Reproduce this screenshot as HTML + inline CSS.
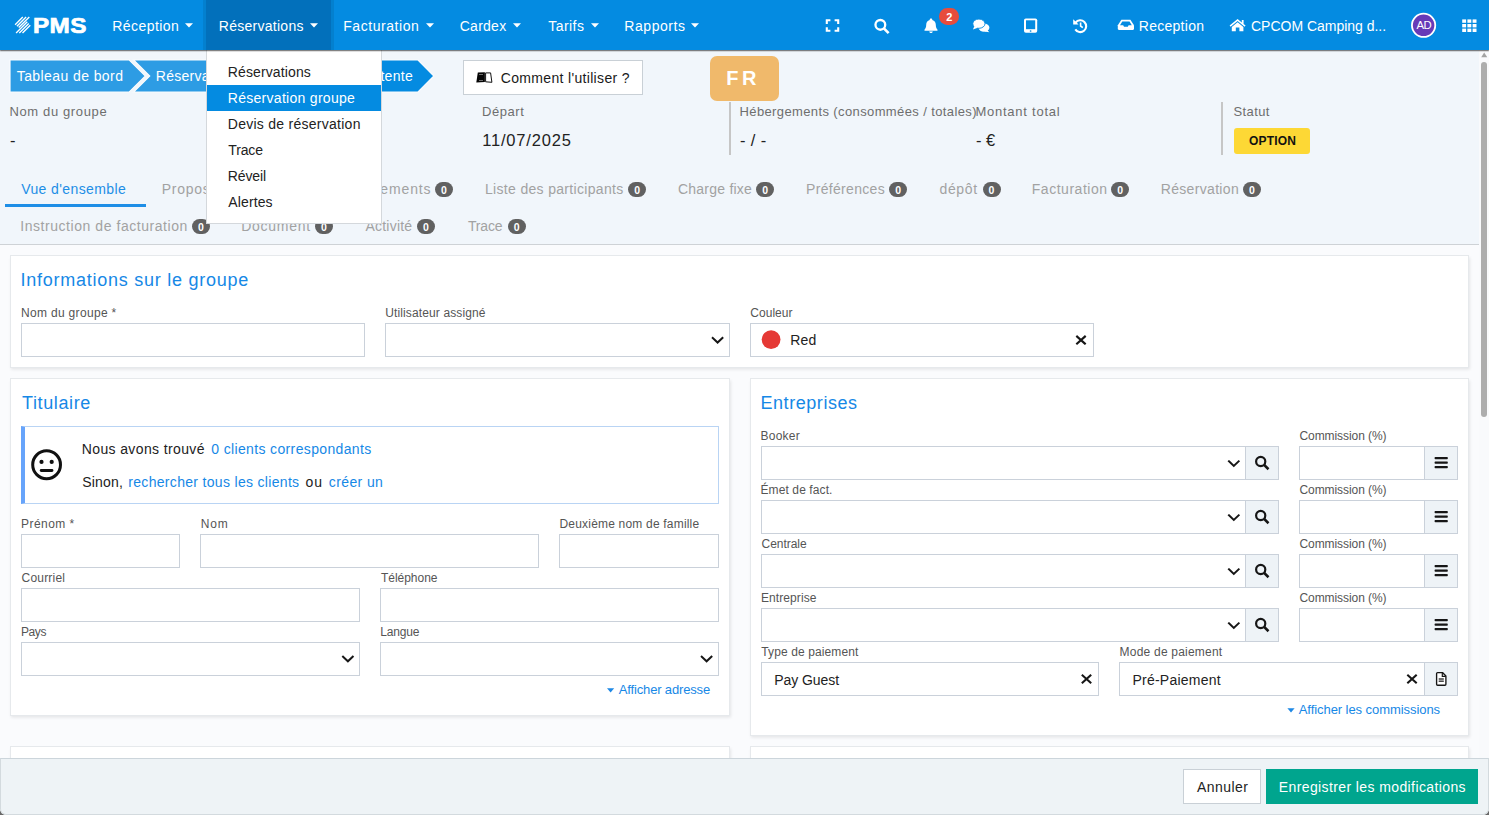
<!DOCTYPE html>
<html lang="fr"><head><meta charset="utf-8"><title>PMS - Réservation groupe</title>
<style>
html,body{margin:0;padding:0;background:#686868;}
body{width:1489px;height:815px;overflow:hidden;font-family:"Liberation Sans", sans-serif;}
#app{position:relative;width:1489px;height:815px;overflow:hidden;background:#fafbfd;border-radius:0 0 6px 6px;}
#app div,#app svg{position:absolute;box-sizing:border-box;}
.t{position:absolute;white-space:nowrap;line-height:20px;height:20px;}
.card{background:#fff;border:1px solid #e6e9ec;box-shadow:1px 1.5px 3px rgba(0,0,0,.09);}
.inp{background:#fff;border:1px solid #cad1da;}
.addon{background:#eef3f7;border:1px solid #cad1da;}
.bdg{background:#616161;border-radius:7.5px;color:#fff;font-size:10.5px;font-weight:700;line-height:16.4px;text-align:center;}
</style></head><body>
<div id="app">
<div class="" style="left:0px;top:50px;width:1489px;height:195px;background:#f1f6fb;border-bottom:1px solid #ced2d6;"></div>
<svg style="left:0px;top:56px;" width="440" height="40" viewBox="0 56 440 40"><g stroke="#f9fbfd" stroke-width="1.2"><polygon points="10,60 129.3,60 145.4,76 129.3,92 10,92" fill="#2d9ce4"/><polygon points="133.6,60 247,60 263.1,76 247,92 133.6,92 149.7,76" fill="#2d9ce4"/><polygon points="252.4,60 418,60 433.9,76 418,92 252.4,92 268.5,76" fill="#048be1"/></g></svg>
<div class="" style="left:463px;top:60px;width:180px;height:35px;background:#fff;border:1px solid #c9d0d6;"></div>
<svg style="left:474px;top:70px;" width="20" height="15" viewBox="474 70 20 15"><polygon points="477.8,72.6 484.9,72.3 484.9,82 476.3,82.6" fill="#050505"/><polygon points="485.6,72.9 490.6,72.9 491.9,82.3 485.6,81.8" fill="#fff" stroke="#050505" stroke-width="0.95" stroke-linejoin="round"/><rect x="479" y="74" width="4" height="0.8" fill="#888"/><rect x="479" y="80" width="4" height="0.8" fill="#888"/></svg>
<div class="" style="left:710px;top:56px;width:69px;height:45px;background:#f0b96b;border-radius:7px;"></div>
<div class="" style="left:728.5px;top:102px;width:2.0px;height:53px;background:#c6c6c6;"></div>
<div class="" style="left:1221px;top:102px;width:2px;height:53px;background:#c6c6c6;"></div>
<div class="" style="left:1234px;top:128px;width:76px;height:26px;background:#fdd835;border-radius:3px;"></div>
<div class="" style="left:5px;top:204px;width:141px;height:3px;background:#1e8ee6;"></div>
<div class="bdg" style="left:252px;top:182px;width:18px;height:15px;">0</div>
<div class="bdg" style="left:435px;top:182px;width:18px;height:15px;">0</div>
<div class="bdg" style="left:628.25px;top:182px;width:18.0px;height:15px;">0</div>
<div class="bdg" style="left:756.25px;top:182px;width:18.0px;height:15px;">0</div>
<div class="bdg" style="left:889.25px;top:182px;width:18.0px;height:15px;">0</div>
<div class="bdg" style="left:982.5px;top:182px;width:18.0px;height:15px;">0</div>
<div class="bdg" style="left:1111.25px;top:182px;width:18.0px;height:15px;">0</div>
<div class="bdg" style="left:1243px;top:182px;width:18px;height:15px;">0</div>
<div class="bdg" style="left:192px;top:219px;width:18px;height:15px;">0</div>
<div class="bdg" style="left:315px;top:219px;width:18px;height:15px;">0</div>
<div class="bdg" style="left:417px;top:219px;width:18px;height:15px;">0</div>
<div class="bdg" style="left:507.75px;top:219px;width:18.0px;height:15px;">0</div>
<div class="card" style="left:10px;top:255px;width:1459px;height:113px;"></div>
<div class="inp" style="left:21px;top:323px;width:344px;height:34px;"></div>
<div class="inp" style="left:385px;top:323px;width:345px;height:34px;"></div>
<div class="inp" style="left:750px;top:323px;width:344px;height:34px;"></div>
<div class="card" style="left:10px;top:378px;width:720px;height:338px;"></div>
<div class="" style="left:21px;top:426px;width:698px;height:78px;background:#fff;border:1px solid #b9d4f4;border-left:4px solid #67a4fb;"></div>
<div class="inp" style="left:21px;top:534px;width:159px;height:34px;"></div>
<div class="inp" style="left:200px;top:534px;width:339px;height:34px;"></div>
<div class="inp" style="left:559px;top:534px;width:160px;height:34px;"></div>
<div class="inp" style="left:21px;top:588px;width:339px;height:34px;"></div>
<div class="inp" style="left:380px;top:588px;width:339px;height:34px;"></div>
<div class="inp" style="left:21px;top:642px;width:339px;height:34px;"></div>
<div class="inp" style="left:380px;top:642px;width:339px;height:34px;"></div>
<div class="card" style="left:750px;top:378px;width:719px;height:358px;"></div>
<div class="inp" style="left:761px;top:446px;width:485px;height:34px;"></div>
<div class="addon" style="left:1245px;top:446px;width:34px;height:34px;"></div>
<div class="inp" style="left:1299px;top:446px;width:126px;height:34px;"></div>
<div class="addon" style="left:1424px;top:446px;width:34px;height:34px;"></div>
<div class="inp" style="left:761px;top:500px;width:485px;height:34px;"></div>
<div class="addon" style="left:1245px;top:500px;width:34px;height:34px;"></div>
<div class="inp" style="left:1299px;top:500px;width:126px;height:34px;"></div>
<div class="addon" style="left:1424px;top:500px;width:34px;height:34px;"></div>
<div class="inp" style="left:761px;top:554px;width:485px;height:34px;"></div>
<div class="addon" style="left:1245px;top:554px;width:34px;height:34px;"></div>
<div class="inp" style="left:1299px;top:554px;width:126px;height:34px;"></div>
<div class="addon" style="left:1424px;top:554px;width:34px;height:34px;"></div>
<div class="inp" style="left:761px;top:608px;width:485px;height:34px;"></div>
<div class="addon" style="left:1245px;top:608px;width:34px;height:34px;"></div>
<div class="inp" style="left:1299px;top:608px;width:126px;height:34px;"></div>
<div class="addon" style="left:1424px;top:608px;width:34px;height:34px;"></div>
<div class="inp" style="left:761px;top:662px;width:338px;height:34px;"></div>
<div class="inp" style="left:1119px;top:662px;width:306px;height:34px;"></div>
<div class="addon" style="left:1424px;top:662px;width:34px;height:34px;"></div>
<div class="card" style="left:10px;top:746px;width:720px;height:66px;"></div>
<div class="card" style="left:750px;top:746px;width:719px;height:66px;"></div>
<svg style="left:0px;top:245px;z-index:5;" width="1479" height="515" viewBox="0 245 1479 515"><polyline points="712.75,338.0 717.6,342.59999999999997 722.45,338.0" fill="none" stroke="#161616" stroke-width="2" stroke-linecap="square"/><circle cx="771.1" cy="339.6" r="9.4" fill="#e53935"/><path d="M1077.1,336.6 L1084.9,343.6 M1084.9,336.6 L1077.1,343.6" stroke="#161616" stroke-width="2.1" stroke-linecap="square"/><circle cx="46.6" cy="464.75" r="13.9" fill="none" stroke="#111" stroke-width="3"/><circle cx="41.5" cy="461.9" r="2.1" fill="#111"/><circle cx="51.7" cy="461.9" r="2.1" fill="#111"/><path d="M41.2,470.5 L52,470.5" stroke="#111" stroke-width="2.8" stroke-linecap="round"/><polyline points="343.04999999999995,656.7 347.9,661.3000000000001 352.75,656.7" fill="none" stroke="#161616" stroke-width="2" stroke-linecap="square"/><polyline points="701.75,656.7 706.6,661.3000000000001 711.45,656.7" fill="none" stroke="#161616" stroke-width="2" stroke-linecap="square"/><polygon points="607,688.2 614.2,688.2 610.6,692.4" fill="#1e88e5"/><polyline points="1228.95,461.3 1233.8,465.9 1238.6499999999999,461.3" fill="none" stroke="#161616" stroke-width="2" stroke-linecap="square"/><circle cx="1260.7" cy="461.45" r="4.60" fill="none" stroke="#161616" stroke-width="2.20"/><path d="M1264.00,464.75 L1268.50,469.25" stroke="#161616" stroke-width="2.50"/><rect x="1434.6000000000001" y="457.09999999999997" width="13.2" height="2.1" rx="0.7" fill="#161616"/><rect x="1434.6000000000001" y="461.59999999999997" width="13.2" height="2.1" rx="0.7" fill="#161616"/><rect x="1434.6000000000001" y="466.09999999999997" width="13.2" height="2.1" rx="0.7" fill="#161616"/><polyline points="1228.95,515.3000000000001 1233.8,519.9000000000001 1238.6499999999999,515.3000000000001" fill="none" stroke="#161616" stroke-width="2" stroke-linecap="square"/><circle cx="1260.7" cy="515.45" r="4.60" fill="none" stroke="#161616" stroke-width="2.20"/><path d="M1264.00,518.75 L1268.50,523.25" stroke="#161616" stroke-width="2.50"/><rect x="1434.6000000000001" y="511.1" width="13.2" height="2.1" rx="0.7" fill="#161616"/><rect x="1434.6000000000001" y="515.6" width="13.2" height="2.1" rx="0.7" fill="#161616"/><rect x="1434.6000000000001" y="520.1" width="13.2" height="2.1" rx="0.7" fill="#161616"/><polyline points="1228.95,569.3000000000001 1233.8,573.9000000000001 1238.6499999999999,569.3000000000001" fill="none" stroke="#161616" stroke-width="2" stroke-linecap="square"/><circle cx="1260.7" cy="569.45" r="4.60" fill="none" stroke="#161616" stroke-width="2.20"/><path d="M1264.00,572.75 L1268.50,577.25" stroke="#161616" stroke-width="2.50"/><rect x="1434.6000000000001" y="565.1" width="13.2" height="2.1" rx="0.7" fill="#161616"/><rect x="1434.6000000000001" y="569.6" width="13.2" height="2.1" rx="0.7" fill="#161616"/><rect x="1434.6000000000001" y="574.1" width="13.2" height="2.1" rx="0.7" fill="#161616"/><polyline points="1228.95,623.3000000000001 1233.8,627.9000000000001 1238.6499999999999,623.3000000000001" fill="none" stroke="#161616" stroke-width="2" stroke-linecap="square"/><circle cx="1260.7" cy="623.45" r="4.60" fill="none" stroke="#161616" stroke-width="2.20"/><path d="M1264.00,626.75 L1268.50,631.25" stroke="#161616" stroke-width="2.50"/><rect x="1434.6000000000001" y="619.1" width="13.2" height="2.1" rx="0.7" fill="#161616"/><rect x="1434.6000000000001" y="623.6" width="13.2" height="2.1" rx="0.7" fill="#161616"/><rect x="1434.6000000000001" y="628.1" width="13.2" height="2.1" rx="0.7" fill="#161616"/><path d="M1082.6,675.5 L1090.4,682.5 M1090.4,675.5 L1082.6,682.5" stroke="#161616" stroke-width="2.1" stroke-linecap="square"/><path d="M1408.1,675.5 L1415.9,682.5 M1415.9,675.5 L1408.1,682.5" stroke="#161616" stroke-width="2.1" stroke-linecap="square"/><path d="M1437.6,672.6 H1442.5 L1445.9,676 V684.2 a1,1 0 0 1 -1,1 H1437.6 a1,1 0 0 1 -1,-1 V673.6 a1,1 0 0 1 1,-1 Z" fill="#fff" stroke="#161616" stroke-width="1.35" stroke-linejoin="round"/><path d="M1442.3,672.8 V676.3 H1445.8" fill="none" stroke="#161616" stroke-width="1.2"/><rect x="1438.7" y="678.3" width="5.1" height="1.4" fill="#333"/><rect x="1438.7" y="680.5" width="5.1" height="1.4" fill="#333"/><polygon points="1287.4,708.2 1294.6,708.2 1291,712.4" fill="#1e88e5"/></svg>
<div class="" style="left:1479px;top:50px;width:10px;height:708px;background:#f9fafc;z-index:22;"></div>
<div class="" style="left:1481.25px;top:62px;width:5.75px;height:354.5px;background:#adadad;border-radius:3px;z-index:23;"></div>
<svg style="left:1479px;top:50px;z-index:23;" width="10" height="10" viewBox="1479 50 10 10"><polygon points="1481.2,57.2 1487.2,57.2 1484.2,52.4" fill="#a3a3a3"/></svg>
<div class="" style="left:206px;top:50px;width:176px;height:174px;background:#fff;border:1px solid #d4d8dc;border-top:none;z-index:20;"></div>
<div class="" style="left:207px;top:85px;width:174px;height:26px;background:#048be1;z-index:20;"></div>
<div class="" style="left:0px;top:0px;width:1489px;height:50px;background:#048be1;box-shadow:0 1px 1.2px rgba(0,0,0,.62);z-index:25;"></div>
<div class="" style="left:206px;top:0px;width:125px;height:50px;background:#0270bb;z-index:26;box-shadow:3px 0 0 rgba(0,0,0,.08),-3px 0 0 rgba(0,0,0,.08);"></div>
<svg style="left:0px;top:0px;z-index:29;" width="1489" height="50" viewBox="0 0 1489 50"><path d="M15.1,24.7 L22.8,17.0" stroke="#fff" stroke-width="1.35"/><path d="M16.9,26.2 L26.1,17.0" stroke="#fff" stroke-width="1.35"/><path d="M18.7,27.6 L29.3,17.0" stroke="#fff" stroke-width="1.35"/><path d="M16.1,33.0 L27.3,21.8" stroke="#fff" stroke-width="1.35"/><path d="M19.3,33.0 L28.8,23.5" stroke="#fff" stroke-width="1.35"/><path d="M22.5,33.0 L30.3,25.2" stroke="#fff" stroke-width="1.35"/><polygon points="185,23.3 193,23.3 189,27.4" fill="#fff"/><polygon points="310,23.3 318,23.3 314,27.4" fill="#fff"/><polygon points="426,23.3 434,23.3 430,27.4" fill="#fff"/><polygon points="513,23.3 521,23.3 517,27.4" fill="#fff"/><polygon points="591,23.3 599,23.3 595,27.4" fill="#fff"/><polygon points="691,23.3 699,23.3 695,27.4" fill="#fff"/><path d="M826.8,23.900000000000002 V20.3 H830.4 M834.6,20.3 H838.2 V23.900000000000002 M838.2,27.2 V30.8 H834.6 M830.4,30.8 H826.8 V27.2" fill="none" stroke="#fff" stroke-width="2.1"/><circle cx="880.35" cy="24.85" r="4.88" fill="none" stroke="#fff" stroke-width="2.33"/><path d="M883.85,28.35 L888.62,33.12" stroke="#fff" stroke-width="2.65"/><path d="M931,18.6 C931.8,18.6 932.3,19.1 932.3,19.9 C934.6,20.5 935.8,22.4 935.8,24.8 C935.8,27.4 936.6,28.6 937.4,29.4 C937.8,29.9 937.5,30.8 936.8,30.8 L925.2,30.8 C924.5,30.8 924.2,29.9 924.6,29.4 C925.4,28.6 926.2,27.4 926.2,24.8 C926.2,22.4 927.4,20.5 929.7,19.9 C929.7,19.1 930.2,18.6 931,18.6 Z" fill="#fff"/><path d="M929.2,31.5 H932.8 C932.8,32.4 932,33 931,33 C930,33 929.2,32.4 929.2,31.5 Z" fill="#fff"/><ellipse cx="984" cy="27.7" rx="5.4" ry="4.1" fill="#fff"/><path d="M987.2,30 L989.3,32.3 L984.6,31.6 Z" fill="#fff"/><ellipse cx="978.9" cy="23.7" rx="6.1" ry="4.6" fill="#fff" stroke="#048be1" stroke-width="0.9"/><path d="M974.6,25.8 L972.9,29.4 L977.8,27.8 Z" fill="#fff"/><rect x="1024" y="18.4" width="13.2" height="14.4" rx="1.8" fill="#fff"/><rect x="1026" y="20.3" width="9.2" height="8.9" fill="#048be1"/><circle cx="1030.6" cy="31" r="0.85" fill="#048be1"/><path d="M1075.6,22.6 A5.9,5.9 0 1 1 1075.3,29.4" fill="none" stroke="#fff" stroke-width="2.1"/><path d="M1073.2,19.2 L1073.2,24.6 L1078.6,24.6 Z" fill="#fff"/><path d="M1080.6,22.4 V26 L1082.8,27.6" fill="none" stroke="#fff" stroke-width="1.6"/><path d="M1121.4,19.8 H1130.4 L1134,25.2 V28.8 C1134,29.5 1133.5,30 1132.8,30 H1119 C1118.3,30 1117.8,29.5 1117.8,28.8 V25.2 Z" fill="#fff"/><path d="M1122.3,21.6 H1129.5 L1131.8,25.2 H1128.6 L1127.8,26.8 H1124 L1123.2,25.2 H1120 Z" fill="#048be1"/><path d="M1237.6,19 L1229.6,25.6 L1230.6,26.8 L1237.6,21 L1244.6,26.8 L1245.6,25.6 L1243.6,23.9 V20 H1241.8 V22.4 Z" fill="#fff"/><path d="M1237.6,22.2 L1231.8,27 V31.2 H1235.8 V27.6 H1239.4 V31.2 H1243.4 V27 Z" fill="#fff"/><circle cx="1423.6" cy="25.3" r="11.65" fill="#673ab7" stroke="#fff" stroke-width="1.8"/><rect x="1462.20" y="19.40" width="3.9" height="3.4" fill="#fff"/><rect x="1462.20" y="24.00" width="3.9" height="3.4" fill="#fff"/><rect x="1462.20" y="28.60" width="3.9" height="3.4" fill="#fff"/><rect x="1467.40" y="19.40" width="3.9" height="3.4" fill="#fff"/><rect x="1467.40" y="24.00" width="3.9" height="3.4" fill="#fff"/><rect x="1467.40" y="28.60" width="3.9" height="3.4" fill="#fff"/><rect x="1472.60" y="19.40" width="3.9" height="3.4" fill="#fff"/><rect x="1472.60" y="24.00" width="3.9" height="3.4" fill="#fff"/><rect x="1472.60" y="28.60" width="3.9" height="3.4" fill="#fff"/></svg>
<div class="" style="left:939px;top:8.2px;width:20.200000000000045px;height:16.6px;background:#e74c3c;border-radius:8.3px;z-index:30;"></div>
<div class="" style="left:0px;top:758px;width:1489px;height:57px;background:#eef3f6;border:1px solid #d3dade;border-top:1px solid #ccd5db;border-radius:0 0 6px 6px;z-index:40;"></div>
<div class="" style="left:1183px;top:769px;width:78px;height:35px;background:#fff;border:1px solid #c9d0d6;z-index:41;"></div>
<div class="" style="left:1266px;top:769px;width:212px;height:35px;background:#00a58e;z-index:41;"></div>
<span class="t" style="left:33.01px;top:16.00px;font-size:21.5px;color:#fff;font-weight:700;letter-spacing:0.309px;z-index:30;-webkit-text-stroke:0.7px #fff;transform:translateY(0px) scale(1.13,1);transform-origin:0 17px;">PMS</span>
<span class="t" style="left:112.25px;top:16.00px;font-size:14px;color:#fff;font-weight:400;letter-spacing:0.438px;z-index:30;">Réception</span>
<span class="t" style="left:218.75px;top:16.00px;font-size:14px;color:#fff;font-weight:400;letter-spacing:0.273px;z-index:30;">Réservations</span>
<span class="t" style="left:343.25px;top:16.00px;font-size:14px;color:#fff;font-weight:400;letter-spacing:0.550px;z-index:30;">Facturation</span>
<span class="t" style="left:459.75px;top:16.00px;font-size:14px;color:#fff;font-weight:400;letter-spacing:0.250px;z-index:30;">Cardex</span>
<span class="t" style="left:548.25px;top:16.00px;font-size:14px;color:#fff;font-weight:400;letter-spacing:0.450px;z-index:30;">Tarifs</span>
<span class="t" style="left:624.25px;top:16.00px;font-size:14px;color:#fff;font-weight:400;letter-spacing:0.571px;z-index:30;">Rapports</span>
<span class="t" style="left:1138.75px;top:16.00px;font-size:14px;color:#fff;font-weight:400;letter-spacing:0.281px;z-index:30;">Reception</span>
<span class="t" style="left:1251.00px;top:16.00px;font-size:14px;color:#fff;font-weight:400;letter-spacing:-0.015px;z-index:30;">CPCOM Camping d...</span>
<span class="t" style="left:946.20px;top:7.00px;font-size:11px;color:#fff;font-weight:700;letter-spacing:0.000px;z-index:31;">2</span>
<span class="t" style="left:1416.60px;top:15.00px;font-size:11.3px;color:#fff;font-weight:400;letter-spacing:-0.750px;z-index:31;">AD</span>
<span class="t" style="left:16.75px;top:66.00px;font-size:14px;color:#fff;font-weight:400;letter-spacing:0.411px;">Tableau de bord</span>
<span class="t" style="left:155.75px;top:66.00px;font-size:14px;color:#fff;font-weight:400;letter-spacing:0.273px;">Réservations</span>
<span class="t" style="left:321.75px;top:66.00px;font-size:14px;color:#fff;font-weight:400;letter-spacing:0.304px;">Liste d&#x27;attente</span>
<span class="t" style="left:500.75px;top:68.00px;font-size:14px;color:#1a1a1a;font-weight:400;letter-spacing:0.329px;">Comment l&#x27;utiliser ?</span>
<span class="t" style="left:726.25px;top:68.00px;font-size:20px;color:#fff;font-weight:700;letter-spacing:-1.000px;">F R</span>
<span class="t" style="left:9.50px;top:102.00px;font-size:13px;color:#6e6e6e;font-weight:400;letter-spacing:0.625px;">Nom du groupe</span>
<span class="t" style="left:246.50px;top:102.00px;font-size:13px;color:#6e6e6e;font-weight:400;letter-spacing:0.667px;">Arrivée</span>
<span class="t" style="left:482.00px;top:102.00px;font-size:13px;color:#6e6e6e;font-weight:400;letter-spacing:0.550px;">Départ</span>
<span class="t" style="left:739.50px;top:102.00px;font-size:13px;color:#6e6e6e;font-weight:400;letter-spacing:0.382px;">Hébergements (consommées / totales)</span>
<span class="t" style="left:975.40px;top:102.00px;font-size:13px;color:#6e6e6e;font-weight:400;letter-spacing:0.758px;">Montant total</span>
<span class="t" style="left:1233.50px;top:102.00px;font-size:13px;color:#6e6e6e;font-weight:400;letter-spacing:0.400px;">Statut</span>
<span class="t" style="left:10.05px;top:130.00px;font-size:16.5px;color:#222;font-weight:400;letter-spacing:0.000px;">-</span>
<span class="t" style="left:245.65px;top:130.00px;font-size:16.5px;color:#222;font-weight:400;letter-spacing:0.833px;">11/07/2025</span>
<span class="t" style="left:482.15px;top:130.00px;font-size:16.5px;color:#222;font-weight:400;letter-spacing:0.833px;">11/07/2025</span>
<span class="t" style="left:740.05px;top:130.00px;font-size:16.5px;color:#222;font-weight:400;letter-spacing:0.363px;">- / -</span>
<span class="t" style="left:976.05px;top:130.00px;font-size:16.5px;color:#222;font-weight:400;letter-spacing:-0.025px;">- €</span>
<span class="t" style="left:1249.00px;top:131.00px;font-size:12px;color:#111;font-weight:700;letter-spacing:0.200px;">OPTION</span>
<span class="t" style="left:21.25px;top:179.00px;font-size:14px;color:#1e8ee6;font-weight:400;letter-spacing:0.385px;">Vue d&#x27;ensemble</span>
<span class="t" style="left:161.75px;top:179.00px;font-size:14px;color:#a2a2a2;font-weight:400;letter-spacing:0.750px;">Propositions</span>
<span class="t" style="left:329.25px;top:179.00px;font-size:14px;color:#a2a2a2;font-weight:400;letter-spacing:0.864px;">Hébergements</span>
<span class="t" style="left:485.00px;top:179.00px;font-size:14px;color:#a2a2a2;font-weight:400;letter-spacing:0.321px;">Liste des participants</span>
<span class="t" style="left:678.00px;top:179.00px;font-size:14px;color:#a2a2a2;font-weight:400;letter-spacing:0.225px;">Charge fixe</span>
<span class="t" style="left:806.00px;top:179.00px;font-size:14px;color:#a2a2a2;font-weight:400;letter-spacing:0.325px;">Préférences</span>
<span class="t" style="left:939.50px;top:179.00px;font-size:14px;color:#a2a2a2;font-weight:400;letter-spacing:0.625px;">dépôt</span>
<span class="t" style="left:1031.75px;top:179.00px;font-size:14px;color:#a2a2a2;font-weight:400;letter-spacing:0.525px;">Facturation</span>
<span class="t" style="left:1160.75px;top:179.00px;font-size:14px;color:#a2a2a2;font-weight:400;letter-spacing:0.325px;">Réservation</span>
<span class="t" style="left:20.25px;top:216.00px;font-size:14px;color:#a2a2a2;font-weight:400;letter-spacing:0.550px;">Instruction de facturation</span>
<span class="t" style="left:241.25px;top:216.00px;font-size:14px;color:#a2a2a2;font-weight:400;letter-spacing:0.714px;">Document</span>
<span class="t" style="left:365.50px;top:216.00px;font-size:14px;color:#a2a2a2;font-weight:400;letter-spacing:0.214px;">Activité</span>
<span class="t" style="left:468.00px;top:216.00px;font-size:14px;color:#a2a2a2;font-weight:400;letter-spacing:-0.188px;">Trace</span>
<span class="t" style="left:20.50px;top:270.00px;font-size:18px;color:#1688e6;font-weight:400;letter-spacing:0.750px;">Informations sur le groupe</span>
<span class="t" style="left:21.00px;top:303.00px;font-size:12px;color:#555;font-weight:400;letter-spacing:0.321px;">Nom du groupe *</span>
<span class="t" style="left:385.25px;top:303.00px;font-size:12px;color:#555;font-weight:400;letter-spacing:0.125px;">Utilisateur assigné</span>
<span class="t" style="left:750.25px;top:303.00px;font-size:12px;color:#555;font-weight:400;letter-spacing:0.042px;">Couleur</span>
<span class="t" style="left:790.25px;top:330.00px;font-size:14px;color:#222;font-weight:400;letter-spacing:0.125px;">Red</span>
<span class="t" style="left:22.00px;top:393.00px;font-size:18px;color:#1688e6;font-weight:400;letter-spacing:0.625px;">Titulaire</span>
<span class="t" style="left:81.75px;top:439.00px;font-size:14px;color:#222;font-weight:400;letter-spacing:0.375px;">Nous avons trouvé</span>
<span class="t" style="left:211.25px;top:439.00px;font-size:14px;color:#1688e6;font-weight:400;letter-spacing:0.359px;">0 clients correspondants</span>
<span class="t" style="left:82.25px;top:472.00px;font-size:14px;color:#222;font-weight:400;letter-spacing:0.200px;">Sinon,</span>
<span class="t" style="left:128.25px;top:472.00px;font-size:14px;color:#1688e6;font-weight:400;letter-spacing:0.317px;">rechercher tous les clients</span>
<span class="t" style="left:305.50px;top:472.00px;font-size:14px;color:#222;font-weight:400;letter-spacing:1.000px;">ou</span>
<span class="t" style="left:328.75px;top:472.00px;font-size:14px;color:#1688e6;font-weight:400;letter-spacing:0.393px;">créer un</span>
<span class="t" style="left:21.00px;top:514.00px;font-size:12px;color:#555;font-weight:400;letter-spacing:0.464px;">Prénom *</span>
<span class="t" style="left:200.75px;top:514.00px;font-size:12px;color:#555;font-weight:400;letter-spacing:0.875px;">Nom</span>
<span class="t" style="left:559.50px;top:514.00px;font-size:12px;color:#555;font-weight:400;letter-spacing:0.193px;">Deuxième nom de famille</span>
<span class="t" style="left:21.50px;top:568.00px;font-size:12px;color:#555;font-weight:400;letter-spacing:0.214px;">Courriel</span>
<span class="t" style="left:381.00px;top:568.00px;font-size:12px;color:#555;font-weight:400;letter-spacing:-0.031px;">Téléphone</span>
<span class="t" style="left:21.00px;top:622.00px;font-size:12px;color:#555;font-weight:400;letter-spacing:-0.417px;">Pays</span>
<span class="t" style="left:380.25px;top:622.00px;font-size:12px;color:#555;font-weight:400;letter-spacing:-0.150px;">Langue</span>
<span class="t" style="left:618.75px;top:680.00px;font-size:13px;color:#1688e6;font-weight:400;letter-spacing:-0.150px;">Afficher adresse</span>
<span class="t" style="left:760.50px;top:393.00px;font-size:18px;color:#1688e6;font-weight:400;letter-spacing:0.550px;">Entreprises</span>
<span class="t" style="left:760.50px;top:426.00px;font-size:12px;color:#555;font-weight:400;letter-spacing:0.250px;">Booker</span>
<span class="t" style="left:760.50px;top:480.00px;font-size:12px;color:#555;font-weight:400;letter-spacing:0.104px;">Émet de fact.</span>
<span class="t" style="left:761.50px;top:534.00px;font-size:12px;color:#555;font-weight:400;letter-spacing:-0.036px;">Centrale</span>
<span class="t" style="left:761.00px;top:588.00px;font-size:12px;color:#555;font-weight:400;letter-spacing:0.083px;">Entreprise</span>
<span class="t" style="left:761.25px;top:642.00px;font-size:12px;color:#555;font-weight:400;letter-spacing:0.117px;">Type de paiement</span>
<span class="t" style="left:1119.60px;top:642.00px;font-size:12px;color:#555;font-weight:400;letter-spacing:0.210px;">Mode de paiement</span>
<span class="t" style="left:1299.50px;top:426.00px;font-size:12px;color:#555;font-weight:400;letter-spacing:-0.077px;">Commission (%)</span>
<span class="t" style="left:1299.50px;top:480.00px;font-size:12px;color:#555;font-weight:400;letter-spacing:-0.077px;">Commission (%)</span>
<span class="t" style="left:1299.50px;top:534.00px;font-size:12px;color:#555;font-weight:400;letter-spacing:-0.077px;">Commission (%)</span>
<span class="t" style="left:1299.50px;top:588.00px;font-size:12px;color:#555;font-weight:400;letter-spacing:-0.077px;">Commission (%)</span>
<span class="t" style="left:774.25px;top:670.00px;font-size:14px;color:#222;font-weight:400;letter-spacing:-0.075px;">Pay Guest</span>
<span class="t" style="left:1132.45px;top:670.00px;font-size:14px;color:#222;font-weight:400;letter-spacing:0.241px;">Pré-Paiement</span>
<span class="t" style="left:1298.75px;top:700.00px;font-size:13px;color:#1688e6;font-weight:400;letter-spacing:-0.065px;">Afficher les commissions</span>
<span class="t" style="left:1197.00px;top:777.00px;font-size:14px;color:#222;font-weight:400;letter-spacing:0.458px;z-index:41;">Annuler</span>
<span class="t" style="left:1278.75px;top:777.00px;font-size:14px;color:#fff;font-weight:400;letter-spacing:0.393px;z-index:41;">Enregistrer les modifications</span>
<span class="t" style="left:227.75px;top:62.00px;font-size:14px;color:#222;font-weight:400;letter-spacing:0.127px;z-index:21;">Réservations</span>
<span class="t" style="left:227.75px;top:88.00px;font-size:14px;color:#fff;font-weight:400;letter-spacing:0.291px;z-index:21;">Réservation groupe</span>
<span class="t" style="left:227.75px;top:114.00px;font-size:14px;color:#222;font-weight:400;letter-spacing:0.268px;z-index:21;">Devis de réservation</span>
<span class="t" style="left:228.25px;top:140.00px;font-size:14px;color:#222;font-weight:400;letter-spacing:-0.150px;z-index:21;">Trace</span>
<span class="t" style="left:227.75px;top:166.00px;font-size:14px;color:#222;font-weight:400;letter-spacing:-0.110px;z-index:21;">Réveil</span>
<span class="t" style="left:228.30px;top:192.00px;font-size:14px;color:#222;font-weight:400;letter-spacing:0.117px;z-index:21;">Alertes</span>
</div>
</body></html>
